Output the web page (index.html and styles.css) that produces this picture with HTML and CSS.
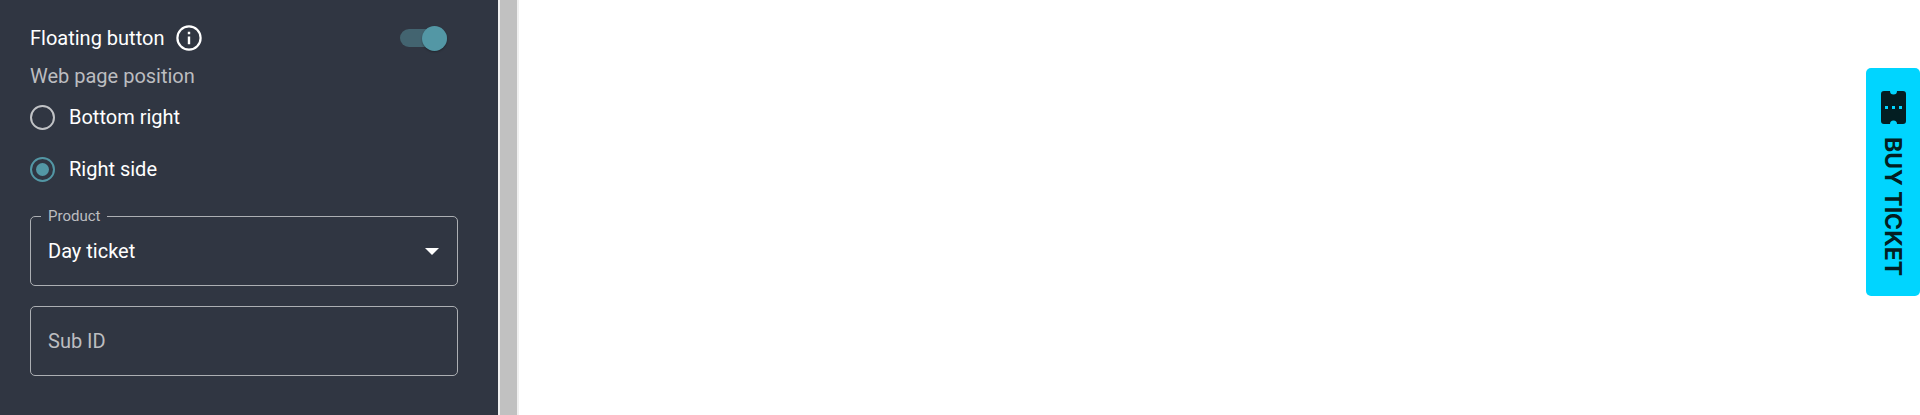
FILE: index.html
```html
<!DOCTYPE html>
<html lang="en">
<head>
    <meta charset="UTF-8">
    <meta name="viewport" content="width=device-width, initial-scale=1.0">
    <title>Floating button</title>
    <link rel="stylesheet" href="styles.css">
</head>
<body>
    <aside class="sidebar">
        <form class="settings">
            <div class="setting-row">
                <label class="setting-name" for="floatingButton">Floating button</label>
                <svg class="info-icon" viewBox="0 0 26 26" aria-hidden="true">
                    <circle cx="13" cy="13" r="11.6" fill="none" stroke="#fff" stroke-width="2.2"/>
                    <path d="M11.8 6.8h2.4v2.4h-2.4zM11.8 11.6h2.4v7.6h-2.4z" fill="#fff"/>
                </svg>
                <input class="toggle" type="checkbox" id="floatingButton" checked>
            </div>

            <p class="group-title" id="positionTitle">Web page position</p>
            <div class="radio-group" role="radiogroup" aria-labelledby="positionTitle">
                <label class="radio-option">
                    <input class="radio" type="radio" name="position" value="bottom">
                    Bottom right
                </label>
                <label class="radio-option">
                    <input class="radio" type="radio" name="position" value="side" checked>
                    Right side
                </label>
            </div>

            <div class="field">
                <label class="field-label" for="product">Product</label>
                <select class="field-control" id="product">
                    <option>Day ticket</option>
                </select>
                <svg class="field-arrow" viewBox="0 0 14 7" aria-hidden="true">
                    <path d="M0 0h14L7 7z" fill="#fff"/>
                </svg>
            </div>
            <div class="field">
                <input class="field-control" type="text" placeholder="Sub ID" aria-label="Sub ID">
            </div>
        </form>
    </aside>
    <div class="divider"></div>

    <main class="preview">
        <button class="buy-btn" type="button">
            <svg class="ticket-icon" viewBox="0 0 25 33" aria-hidden="true">
                <path fill="#031e22" fill-rule="evenodd" d="M3 0h6a3.5 3.5 0 0 0 7 0h6a3 3 0 0 1 3 3v27a3 3 0 0 1-3 3h-6a3.5 3.5 0 0 0-7 0H3a3 3 0 0 1-3-3V3a3 3 0 0 1 3-3zM4 15v3h3v-3zM11 15v3h3v-3zM18 15v3h3v-3z"/>
            </svg>
            BUY TICKET
        </button>
    </main>
</body>
</html>
```

FILE: styles.css
```css
* {
    margin: 0;
    padding: 0;
    box-sizing: border-box;
}

body {
    display: flex;
    min-height: 100vh;
    font-family: Roboto, 'Liberation Sans', sans-serif;
    font-size: 20px;
    line-height: 26px;
    color: #fff;
    background: #fff;
}

/* Settings panel */
.sidebar {
    flex: 0 0 498px;
    padding: 25px 40px 32px 30px;
    background: #303642;
}

.settings {
    display: flex;
    flex-direction: column;
}

.setting-row {
    display: flex;
    align-items: center;
    gap: 12px;
    padding-right: 11px;
}

.info-icon {
    width: 26px;
    height: 26px;
}

.toggle {
    appearance: none;
    display: flex;
    align-items: center;
    justify-content: flex-end;
    width: 47px;
    height: 18px;
    margin-left: auto;
    border-radius: 9px;
    background: #436470;
    cursor: pointer;
}

.toggle::before {
    content: "";
    flex: none;
    width: 25px;
    height: 25px;
    border-radius: 50%;
    background: #5397a5;
    box-shadow: 0 1px 2px rgba(0, 0, 0, 0.3);
}

.toggle:not(:checked) {
    justify-content: flex-start;
}

.group-title {
    margin: 12px 0 15px;
    color: #bcbdc0;
}

.radio-group {
    display: flex;
    flex-direction: column;
    gap: 26px;
    margin-bottom: 34px;
}

.radio-option {
    display: flex;
    align-items: center;
    gap: 14px;
    cursor: pointer;
}

.radio {
    appearance: none;
    width: 25px;
    height: 25px;
    border: 2px solid #c1c3c6;
    border-radius: 50%;
    cursor: pointer;
}

.radio:checked {
    padding: 4px;
    border-color: #5397a5;
    background: #5397a5 content-box;
}

/* Outlined fields */
.field {
    position: relative;
}

.field + .field {
    margin-top: 20px;
}

.field-control {
    display: block;
    appearance: none;
    width: 100%;
    height: 70px;
    padding: 0 17px;
    border: 1px solid #acafb3;
    border-radius: 5px;
    background: transparent;
    color: #fff;
    font: inherit;
}

.field-control option {
    color: #303642;
}

.field-control::placeholder {
    color: #bcbdc0;
    opacity: 1;
}

/* Sits on the top border of the field */
.field-label {
    position: absolute;
    top: -10px;
    left: 11px;
    padding: 0 7px;
    background: #303642;
    color: #bcbdc0;
    font-size: 15px;
    line-height: 20px;
}

.field-arrow {
    position: absolute;
    top: 32px;
    right: 19px;
    width: 14px;
    height: 7px;
    pointer-events: none;
}

.divider {
    flex: 0 0 21px;
    border: solid #f0f0f0;
    border-width: 0 2px;
    background: #c1c1c1;
}

/* Page preview */
.preview {
    flex: 1;
    display: flex;
    justify-content: flex-end;
    align-items: flex-start;
    padding-top: 68px;
}

.buy-btn {
    display: flex;
    align-items: center;
    gap: 13px;
    padding: 23px 14px 20px;
    border: none;
    border-radius: 5px;
    background: #00d5ff;
    color: #031e22;
    font-family: Inter, 'Open Sans', sans-serif;
    font-size: 23px;
    font-weight: 700;
    line-height: 26px;
    writing-mode: vertical-rl;
    cursor: pointer;
}

.ticket-icon {
    width: 25px;
    height: 33px;
}
```
